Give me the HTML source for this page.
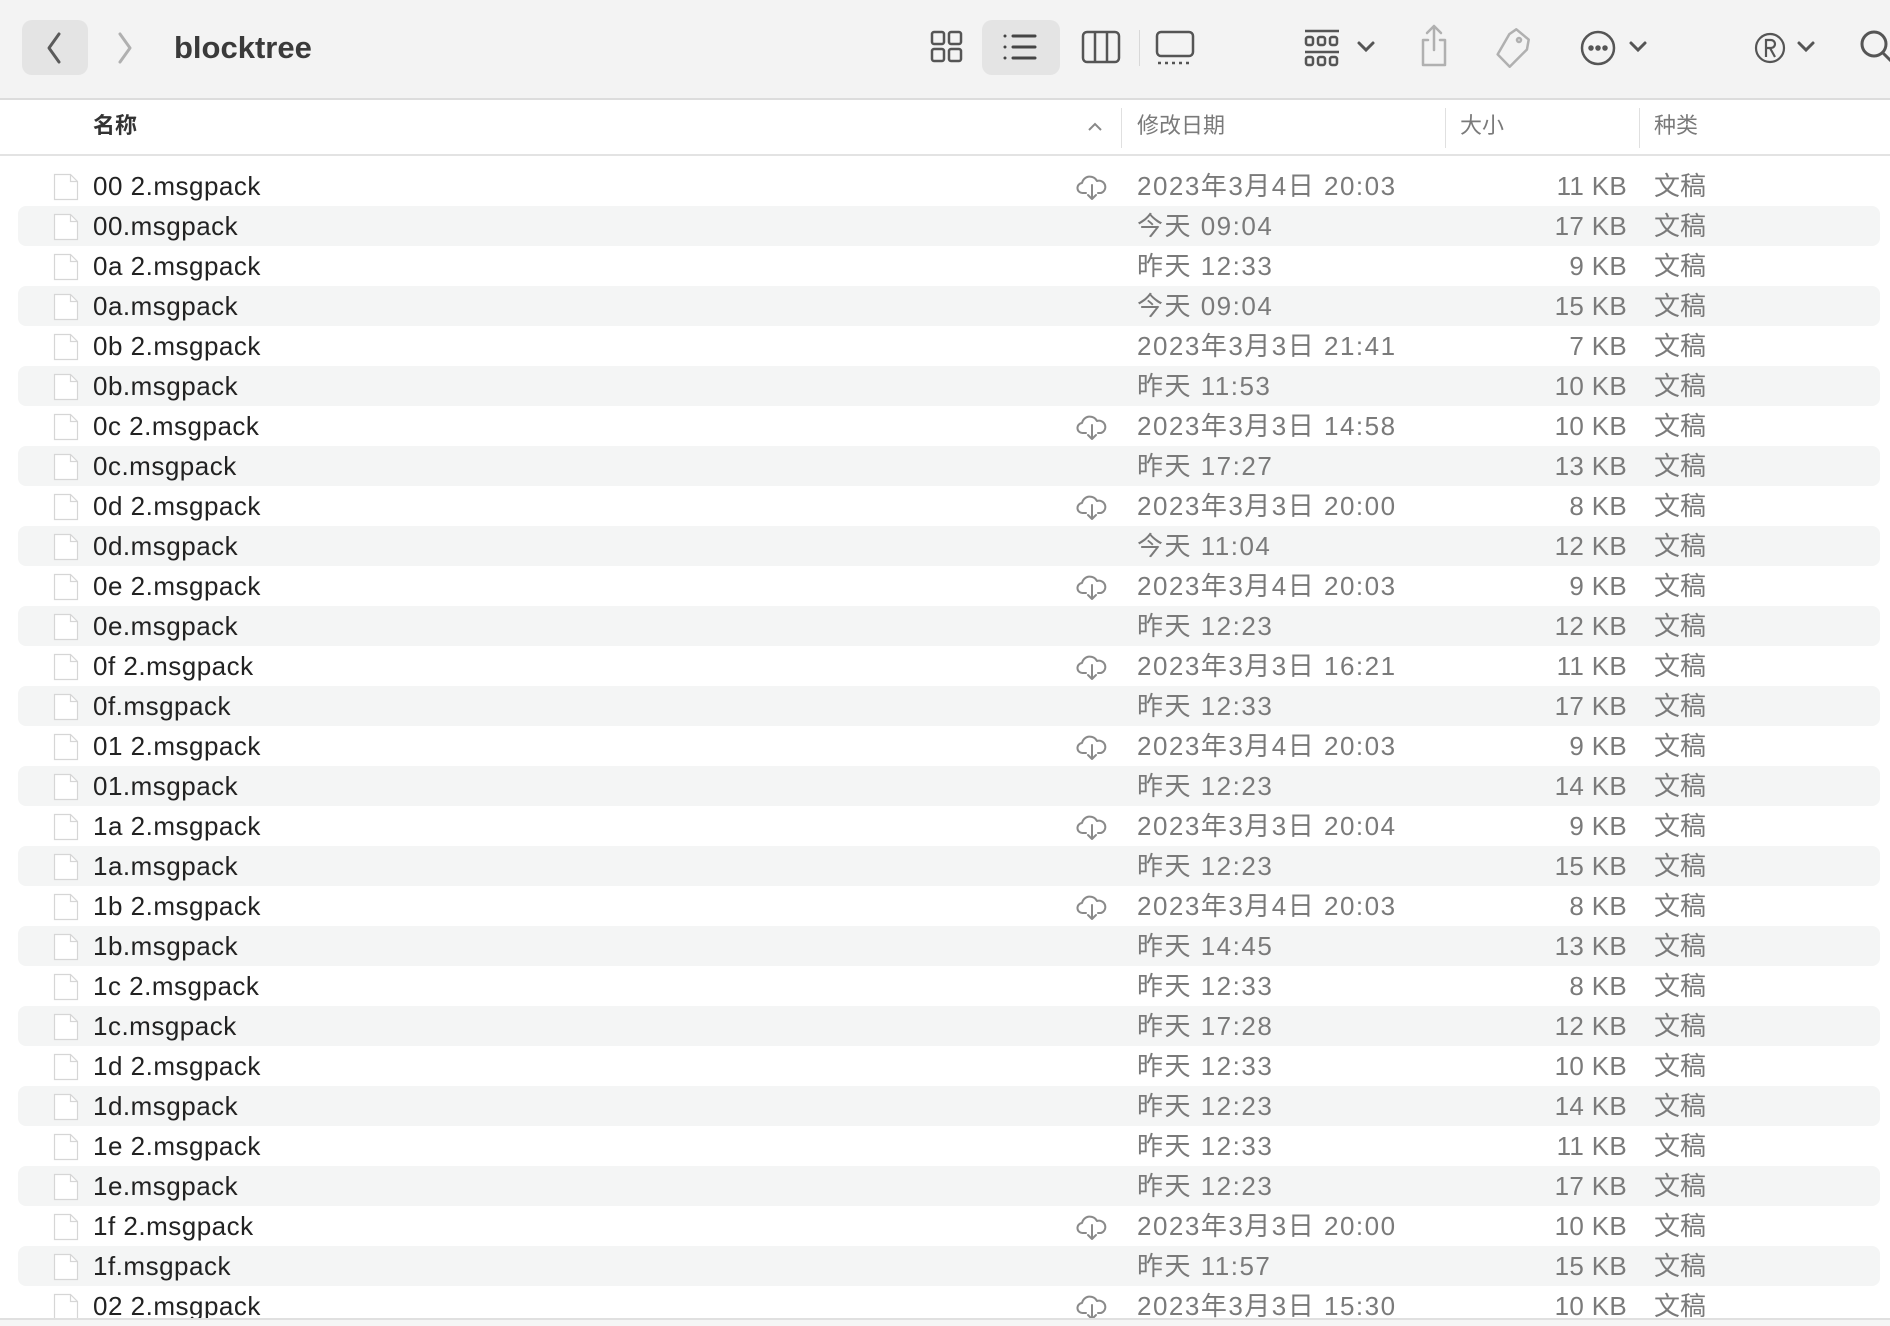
<!DOCTYPE html>
<html><head><meta charset="utf-8"><style>
*{margin:0;padding:0;box-sizing:border-box}
body{width:1890px;height:1326px;overflow:hidden;background:#fff;font-family:"Liberation Sans","Noto Sans CJK SC",sans-serif;position:relative}
.tb{position:absolute;left:0;top:0;width:1890px;height:100px;background:#f3f3f3;border-bottom:2px solid #dcdcdc}
.a{position:absolute}
.hd{position:absolute;top:100px;left:0;width:1890px;height:56px;border-bottom:2px solid #e3e3e3;font-size:22px;color:#7a7a7a}
.hd span{position:absolute;top:11px;line-height:30px}
.sep{position:absolute;top:8px;width:1px;height:40px;background:#e0e0e0}
.row{position:absolute;left:18px;width:1862px;height:40px;border-radius:8px}
.row.s{background:#f4f5f5}
.row .ic{position:absolute;left:35px;top:7px;width:26px;height:28px}
.row span{position:absolute;top:5px;height:30px;line-height:30px;font-size:26px;color:#7a7a7a;white-space:nowrap}
.row .n{left:75px;color:#222;letter-spacing:0.5px}
.row .d{left:1119px;letter-spacing:1.5px}
.row .z{right:253px;letter-spacing:0.3px}
.row .k{left:1636px}
.row .c{position:absolute;left:1058px;top:7px}
</style></head><body>
<div class="tb">
 <div class="a" style="left:22px;top:20px;width:66px;height:55px;border-radius:10px;background:#e4e4e4"></div>
 <svg class="a" style="left:40px;top:30px" width="30" height="36"><path d="M19 4 L9 18 L19 32" fill="none" stroke="#5a5a5a" stroke-width="3" stroke-linecap="round" stroke-linejoin="round"/></svg>
 <svg class="a" style="left:110px;top:30px" width="30" height="36"><path d="M10 4 L20 18 L10 32" fill="none" stroke="#b0b0b0" stroke-width="3" stroke-linecap="round" stroke-linejoin="round"/></svg>
 <div class="a" style="left:174px;top:30px;font-size:31px;font-weight:bold;color:#3a3a3a">blocktree</div>
 <div class="a" style="left:982px;top:20px;width:78px;height:55px;border-radius:10px;background:#e4e4e4"></div>
 <svg class="a" style="left:930px;top:30px" width="34" height="34" fill="none" stroke="#555" stroke-width="2.5"><rect x="2" y="2" width="12" height="12" rx="2"/><rect x="19" y="2" width="12" height="12" rx="2"/><rect x="2" y="19" width="12" height="12" rx="2"/><rect x="19" y="19" width="12" height="12" rx="2"/></svg>
 <svg class="a" style="left:1002px;top:32px" width="36" height="30" stroke="#444" stroke-width="3" stroke-linecap="round"><path d="M3 4h0M3 15h0M3 26h0M11 4h22M11 15h22M11 26h22"/></svg>
 <svg class="a" style="left:1081px;top:30px" width="40" height="34" fill="none" stroke="#555" stroke-width="2.5"><rect x="2" y="2" width="36" height="30" rx="4"/><path d="M14 2v30M26 2v30"/></svg>
 <div class="a" style="left:1139px;top:30px;width:1px;height:36px;background:#d8d8d8"></div>
 <svg class="a" style="left:1155px;top:30px" width="40" height="36" fill="none" stroke="#555" stroke-width="2.5"><rect x="2" y="2" width="36" height="24" rx="4"/><path d="M3 33h3M10 33h3M17 33h3M24 33h3M31 33h3"/></svg>
 <svg class="a" style="left:1303px;top:28px" width="40" height="40" fill="none" stroke="#555" stroke-width="2.5"><path d="M2 3h34M2 24h34"/><rect x="3" y="9" width="7" height="8" rx="2"/><rect x="15" y="9" width="7" height="8" rx="2"/><rect x="27" y="9" width="7" height="8" rx="2"/><rect x="3" y="29" width="7" height="8" rx="2"/><rect x="15" y="29" width="7" height="8" rx="2"/><rect x="27" y="29" width="7" height="8" rx="2"/></svg>
 <svg class="a" style="left:1356px;top:40px" width="20" height="14" fill="none" stroke="#555" stroke-width="3" stroke-linecap="round"><path d="M3 3l7 7 7-7"/></svg>
 <svg class="a" style="left:1418px;top:24px" width="32" height="44" fill="none" stroke="#b0b0b0" stroke-width="2.5" stroke-linecap="round" stroke-linejoin="round"><path d="M16 2v24M9 9l7-7 7 7M10 16H5v25h22V16h-5"/></svg>
 <svg class="a" style="left:1493px;top:26px" width="40" height="44" fill="none" stroke="#b0b0b0" stroke-width="2.5" stroke-linejoin="round"><path d="M20 3l14 8v10L20 41 6 31l8-22z" transform="rotate(10 20 22)"/><circle cx="26" cy="14" r="2"/></svg>
 <svg class="a" style="left:1579px;top:29px" width="38" height="38" fill="none" stroke="#555" stroke-width="2.5"><circle cx="19" cy="19" r="16"/><circle cx="12" cy="19" r="1.5" fill="#555"/><circle cx="19" cy="19" r="1.5" fill="#555"/><circle cx="26" cy="19" r="1.5" fill="#555"/></svg>
 <svg class="a" style="left:1628px;top:40px" width="20" height="14" fill="none" stroke="#555" stroke-width="3" stroke-linecap="round"><path d="M3 3l7 7 7-7"/></svg>
 <svg class="a" style="left:1754px;top:31px" width="32" height="34" fill="none" stroke="#555" stroke-width="2.2"><circle cx="16" cy="17" r="14"/><path d="M12 26V9h5a4 4 0 010 8h-5M16 17l5 9"/></svg>
 <svg class="a" style="left:1796px;top:40px" width="20" height="14" fill="none" stroke="#555" stroke-width="3" stroke-linecap="round"><path d="M3 3l7 7 7-7"/></svg>
 <svg class="a" style="left:1858px;top:28px" width="32" height="40" fill="none" stroke="#555" stroke-width="3"><circle cx="16" cy="16" r="12"/><path d="M25 25l8 8"/></svg>
</div>
<div class="hd">
 <span style="left:93px;color:#333;font-weight:bold">名称</span>
 <svg class="a" style="left:1086px;top:20px" width="18" height="14" fill="none" stroke="#888" stroke-width="2"><path d="M3 10l6-6 6 6"/></svg>
 <div class="sep" style="left:1121px"></div><span style="left:1137px">修改日期</span>
 <div class="sep" style="left:1445px"></div><span style="left:1460px">大小</span>
 <div class="sep" style="left:1639px"></div><span style="left:1654px">种类</span>
</div>
<div id="rows"></div>
<div class="a" style="left:0;top:1318px;width:1890px;height:8px;background:#f5f5f5;border-top:2px solid #e0e0e0"></div>
<script>
const D=[["00 2.msgpack","2023年3月4日 20:03","11 KB",1],["00.msgpack","今天 09:04","17 KB"],["0a 2.msgpack","昨天 12:33","9 KB"],["0a.msgpack","今天 09:04","15 KB"],["0b 2.msgpack","2023年3月3日 21:41","7 KB"],["0b.msgpack","昨天 11:53","10 KB"],["0c 2.msgpack","2023年3月3日 14:58","10 KB",1],["0c.msgpack","昨天 17:27","13 KB"],["0d 2.msgpack","2023年3月3日 20:00","8 KB",1],["0d.msgpack","今天 11:04","12 KB"],["0e 2.msgpack","2023年3月4日 20:03","9 KB",1],["0e.msgpack","昨天 12:23","12 KB"],["0f 2.msgpack","2023年3月3日 16:21","11 KB",1],["0f.msgpack","昨天 12:33","17 KB"],["01 2.msgpack","2023年3月4日 20:03","9 KB",1],["01.msgpack","昨天 12:23","14 KB"],["1a 2.msgpack","2023年3月3日 20:04","9 KB",1],["1a.msgpack","昨天 12:23","15 KB"],["1b 2.msgpack","2023年3月4日 20:03","8 KB",1],["1b.msgpack","昨天 14:45","13 KB"],["1c 2.msgpack","昨天 12:33","8 KB"],["1c.msgpack","昨天 17:28","12 KB"],["1d 2.msgpack","昨天 12:33","10 KB"],["1d.msgpack","昨天 12:23","14 KB"],["1e 2.msgpack","昨天 12:33","11 KB"],["1e.msgpack","昨天 12:23","17 KB"],["1f 2.msgpack","2023年3月3日 20:00","10 KB",1],["1f.msgpack","昨天 11:57","15 KB"],["02 2.msgpack","2023年3月3日 15:30","10 KB",1]];
let h="";
D.forEach((r,i)=>{
h+=`<div class="row${i%2?' s':''}" style="top:${166+i*40}px"><svg class="ic" viewBox="0 0 26 28"><path d="M1.5 1.5h16l7 7v18h-23z" fill="#fff" stroke="#d6d6d6" stroke-width="1.2"/><path d="M17.5 1.5v7h7" fill="none" stroke="#d6d6d6" stroke-width="1.2"/></svg><span class="n">${r[0]}</span>`+
(r[3]?`<svg class="c" width="32" height="28" fill="none" stroke="#8a8a8a" stroke-width="2" stroke-linecap="round" stroke-linejoin="round"><path d="M10 20H7a5 5 0 01-1-10 8 8 0 0115-2 5.5 5.5 0 014 12h-3"/><path d="M16 12v14M12 22l4 4 4-4"/></svg>`:"")+
`<span class="d">${r[1]}</span><span class="z">${r[2]}</span><span class="k">文稿</span></div>`;});
document.getElementById("rows").innerHTML=h;
</script>
</body></html>
